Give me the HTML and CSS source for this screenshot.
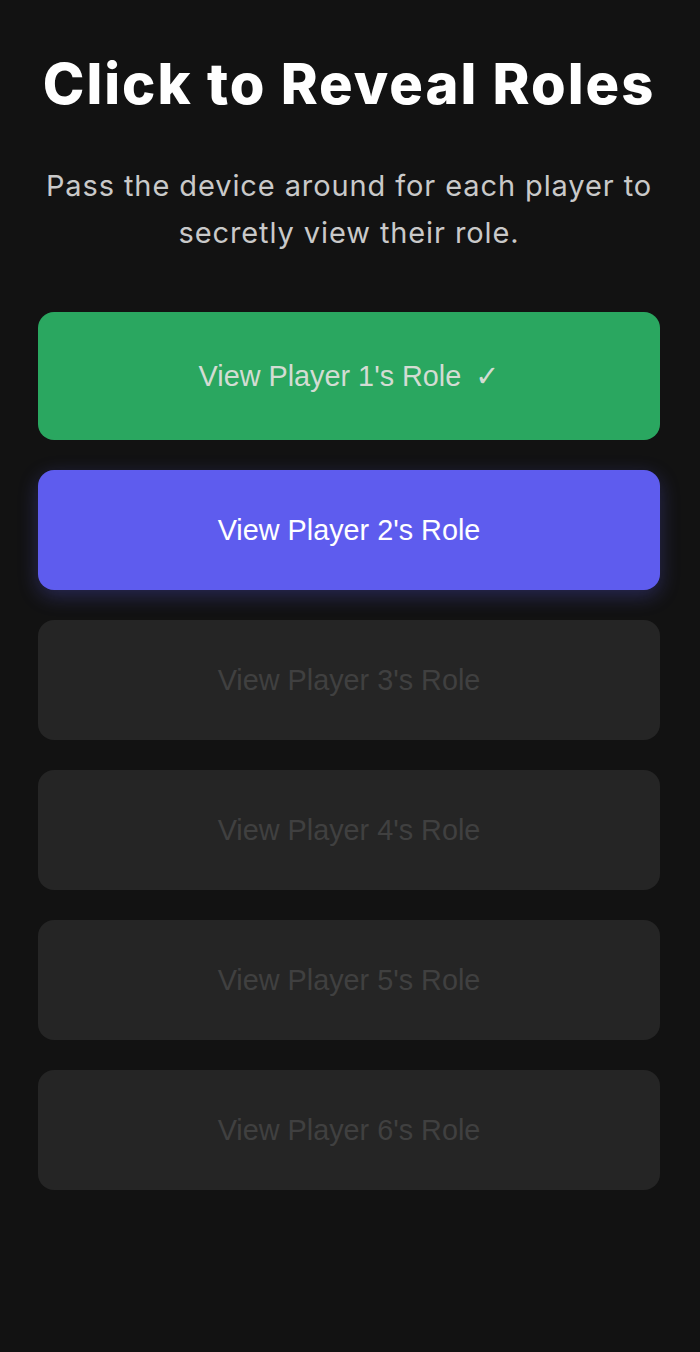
FILE: index.html
```html
<!DOCTYPE html>
<html lang="en">
<head>
  <meta charset="UTF-8">
  <meta name="viewport" content="width=device-width, initial-scale=1.0">
  <title>Reveal Roles</title>
  <link rel="stylesheet" href="styles.css">
</head>
<body>
  <div class="container">
    <h1>Click to Reveal Roles</h1>
    <p class="intro">Pass the device around for each player to secretly view their role.</p>
    <div class="role-list">
      <button class="role-btn done">View Player 1's Role <span class="check">✓</span></button>
      <button class="role-btn active">View Player 2's Role</button>
      <button class="role-btn locked" disabled>View Player 3's Role</button>
      <button class="role-btn locked" disabled>View Player 4's Role</button>
      <button class="role-btn locked" disabled>View Player 5's Role</button>
      <button class="role-btn locked" disabled>View Player 6's Role</button>
    </div>
  </div>
</body>
</html>
```

FILE: styles.css
```css
body {
  background: #121212;
  color: #fff;
  font-family: 'Inter', 'Liberation Sans', sans-serif;
  margin: 0;
}
.container {
  padding: 50px 40px 60px 38px;
  text-align: center;
}
h1 {
  font-size: 56px;
  font-weight: 800;
  letter-spacing: 2px;
  margin: 0 0 44px 0;
}
.intro {
  font-size: 29px;
  line-height: 47px;
  letter-spacing: 0.9px;
  color: #c9c9c9;
  margin: 0 0 56px 0;
}
.role-list {
  display: flex;
  flex-direction: column;
  gap: 30px;
}
.role-btn {
  font-family: 'Liberation Sans', Arial, sans-serif;
  font-size: 28.8px;
  line-height: 32px;
  padding: 44px 20px;
  border-radius: 16px;
  border: none;
  cursor: pointer;
  width: 100%;
}
.role-btn.done {
  background: #2aa760;
  color: #d3dcd3;
  padding: 48px 20px;
}
.check {
  margin-left: 6px;
  font-family: 'DejaVu Sans', sans-serif;
  font-weight: bold;
}
.role-btn.active {
  background: #5e5cee;
  color: #fff;
  box-shadow: 0 6px 20px rgba(94, 92, 238, 0.3);
}
.role-btn.locked {
  background: #252525;
  color: #404040;
  cursor: not-allowed;
}
```
